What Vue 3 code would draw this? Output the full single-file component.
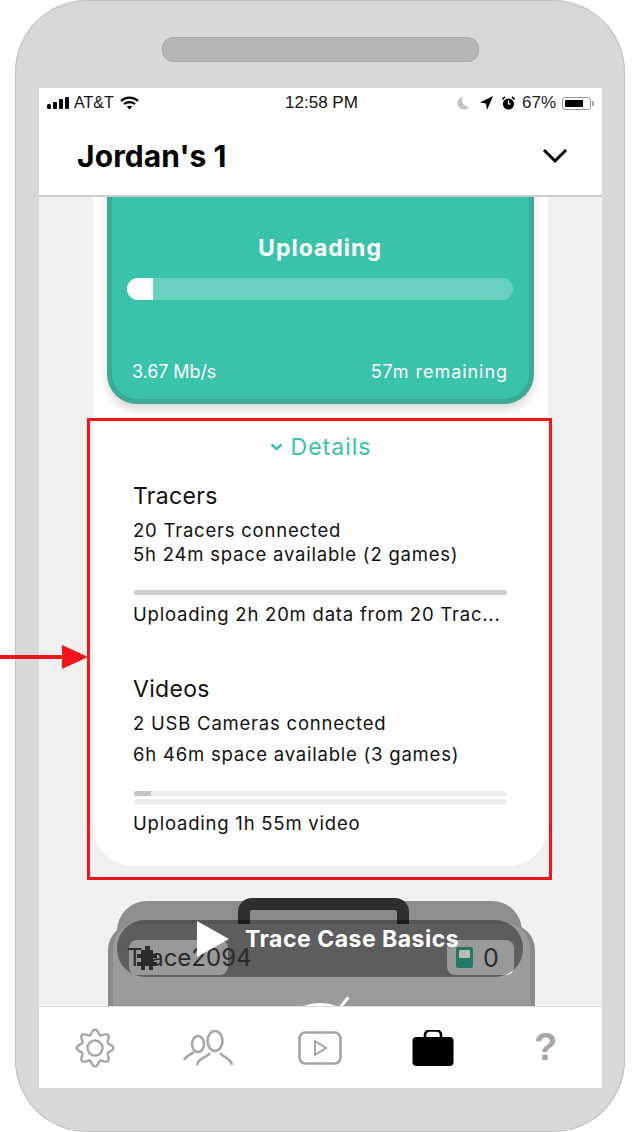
<template>
  <div class="page">
    <div class="phone">
      <div class="speaker"></div>
      <div class="screen">
        <!-- status bar -->
        <div class="status">
          <div class="status-left">
            <svg width="23" height="12" viewBox="0 0 23 12"><rect x="0" y="7" width="4" height="5" rx="1.5"/><rect x="6" y="5" width="4" height="7" rx="1"/><rect x="12" y="2" width="4" height="10" rx="1"/><rect x="18" y="0" width="4" height="12" rx="1"/></svg>
            <span>AT&amp;T</span>
            <svg class="wifi" width="19" height="14" viewBox="0 0 19 14" fill="none" stroke="#000" stroke-width="2.2"><path d="M1 5 C6 0.5 13 0.5 18 5"/><path d="M4 8 C7 5.5 12 5.5 15 8"/><path d="M9.5 13.5 L6.8 10.6 C8.3 9.6 10.7 9.6 12.2 10.6 Z" fill="#000" stroke="none"/></svg>
          </div>
          <div class="status-time">12:58 PM</div>
          <div class="status-right">
            <svg width="12" height="14" viewBox="0 0 12 14"><path d="M6 0.5 A6.5 6.5 0 1 0 12 11 A7 7 0 0 1 6 0.5 Z" fill="#c4c4c4"/></svg>
            <svg class="nav-arrow" width="13" height="14" viewBox="0 0 13 14"><path d="M13 0 L0 6.5 L6 7.5 L7 14 Z"/></svg>
            <svg class="alarm" width="13" height="14" viewBox="0 0 13 14"><circle cx="6.5" cy="8" r="5.6"/><path d="M0.5 3.5 L3 0.8 M12.5 3.5 L10 0.8" stroke="#000" stroke-width="1.6"/><path d="M6.5 4.5 V8 H9" stroke="#fff" stroke-width="1.2" fill="none"/></svg>
            <span>67%</span>
            <div class="battery"><div class="battery-level"></div></div>
            <div class="battery-tip"></div>
          </div>
        </div>

        <!-- header -->
        <header class="header">
          <h1>Jordan's 1</h1>
          <svg width="26" height="16" viewBox="0 0 26 16" fill="none" stroke="#000" stroke-width="3"><path d="M2 2 L13 13 L24 2"/></svg>
        </header>

        <!-- scrolling content -->
        <main class="content">
          <section class="sheet">
            <div class="upload-card">
              <div class="upload-title">Uploading</div>
              <div class="progress"><div class="progress-fill"></div></div>
              <div class="upload-meta">
                <span class="rate">3.67 Mb/s</span>
                <span>57m remaining</span>
              </div>
            </div>

            <div class="details-toggle">
              <svg width="13" height="8" viewBox="0 0 13 8" fill="none" stroke="#39c3aa" stroke-width="2.4"><path d="M1.5 1.5 L6.5 6 L11.5 1.5"/></svg>
              <span>Details</span>
            </div>

            <div class="block">
              <h2>Tracers</h2>
              <p class="tight">20 Tracers connected</p>
              <p class="tight">5h 24m space available (2 games)</p>
              <div class="track solid first-track"></div>
              <p class="caption">Uploading 2h 20m data from 20 Trac...</p>
            </div>

            <div class="block videos">
              <h2>Videos</h2>
              <p class="loose">2 USB Cameras connected</p>
              <p class="loose">6h 46m space available (3 games)</p>
              <div class="track first-track video-track"><div class="track-fill"></div></div>
              <div class="track second-track"></div>
              <p class="caption">Uploading 1h 55m video</p>
            </div>
          </section>

          <section class="case">
            <div class="case-lid"></div>
            <div class="case-handle"></div>
            <div class="case-body">
              <div class="case-row">
                <div class="chip chip-name"></div>
                <div class="chip chip-count"></div>
              </div>
              <div class="case-gauge"></div>
              <div class="case-needle"></div>
            </div>
            <div class="tip-pill"></div>
            <svg class="case-mark" width="24" height="24" viewBox="0 0 24 24" fill="#2b2b2b"><path d="M8 0h5v4h3v4h4v4h-4v4h4v4h-4v4h-4v-4H8v4H4v-4H0v-4h4v-4H0V8h4V4h4z"/></svg>
            <span class="case-name">Trace2094</span>
            <svg class="tracer-icon" width="17" height="21" viewBox="0 0 17 21"><rect width="17" height="21" rx="2" fill="#217a68"/><rect x="3" y="3" width="11" height="8" rx="1" fill="#b9b9b9"/></svg>
            <span class="case-count">0</span>
            <svg class="tip-play" width="32" height="36" viewBox="0 0 32 36"><path d="M0 0 L32 18 L0 36 Z" fill="#fff"/></svg>
            <span class="tip-label">Trace Case Basics</span>
          </section>
        </main>

        <!-- tab bar -->
        <nav class="tabs">
          <svg width="40" height="40" viewBox="0 0 40 40" fill="none" stroke="#a6a6a6" stroke-width="2.4"><circle cx="20" cy="20" r="7.5"/><path :d="gearPath" stroke-linejoin="round"/></svg>
          <svg width="50" height="36" viewBox="0 0 50 36" fill="none" stroke="#a6a6a6" stroke-width="2.6"><ellipse cx="15" cy="14" rx="6" ry="8"/><path d="M1 30 C3 25 8 25 11 22"/><ellipse cx="32" cy="11" rx="7.5" ry="10"/><path d="M14 35 C15 28 22 29 27 23 M37 23 C41 28 48 28 49 35"/></svg>
          <svg width="44" height="34" viewBox="0 0 44 34" fill="none" stroke="#a6a6a6" stroke-width="2.6"><rect x="1.5" y="1.5" width="41" height="31" rx="6"/><path d="M17 10 L28 17 L17 24 Z" stroke-width="2"/></svg>
          <svg width="42" height="36" viewBox="0 0 42 36"><path d="M13 7 V5 A4.5 4.5 0 0 1 17.5 0.5 H24.5 A4.5 4.5 0 0 1 29 5 V7" fill="none" stroke="#000" stroke-width="2.6"/><rect x="0.5" y="7" width="41" height="29" rx="4"/></svg>
          <span class="help">?</span>
        </nav>
      </div>
    </div>

    <!-- annotation -->
    <div class="callout"></div>
    <div class="arrow-line"></div>
    <div class="arrow-head"></div>
  </div>
</template>

<script setup>
// wavy outline of the settings cog, 8 lobes
const points = []
for (let i = 0; i < 96; i++) {
  const a = (i / 96) * Math.PI * 2
  const r = 16 + 2.4 * Math.cos(a * 8)
  points.push(`${(20 + r * Math.sin(a)).toFixed(2)} ${(20 - r * Math.cos(a)).toFixed(2)}`)
}
const gearPath = `M${points.join(' L')} Z`
</script>

<style>
html, body {
  margin: 0;
  background: #fff;
}
</style>

<style scoped>
.page {
  position: relative;
  width: 640px;
  height: 1132px;
  overflow: hidden;
  font-family: Inter, "Noto Sans", sans-serif;
  color: #111;
}

.phone {
  width: 610px;
  height: 1132px;
  margin-left: 15px;
  box-sizing: border-box;
  padding: 37px 23px 44px 24px;
  background: #d8d8d8;
  border-radius: 72px;
  box-shadow: inset 0 0 0 1px #c2c2c2;
}

.speaker {
  width: 317px;
  height: 25px;
  margin: 0 auto 26px;
  background: #b5b5b5;
  border-radius: 12px;
  box-shadow: inset 0 0 0 1px #a9a9a9;
}

.screen {
  height: 1000px;
  background: #fff;
  display: flex;
  flex-direction: column;
}

.status {
  height: 28px;
  flex: none;
  padding: 2px 8px 0;
  box-sizing: border-box;
  display: grid;
  grid-template-columns: 1fr auto 1fr;
  align-items: center;
  font-family: "Liberation Sans", sans-serif;
}

.status-left,
.status-right {
  display: flex;
  align-items: center;
}

.status-left span {
  margin-left: 4px;
  font-size: 16px;
}

.wifi {
  margin-left: 6px;
}

.status-time {
  font-size: 17px;
  position: relative;
  left: 1px;
}

.status-right {
  justify-content: flex-end;
  font-size: 17px;
  color: #222;
}

.nav-arrow {
  margin-left: 11px;
}

.alarm {
  margin-left: 9px;
}

.status-right span {
  margin-left: 7px;
}

.battery {
  width: 29px;
  height: 13px;
  margin-left: 6px;
  box-sizing: border-box;
  padding: 2px;
  border: 1px solid #999;
  border-radius: 3px;
}

.battery-level {
  width: 18px;
  height: 100%;
  background: #000;
  border-radius: 1px;
}

.battery-tip {
  width: 2px;
  height: 5px;
  margin-left: 1px;
  background: #aaa;
}

.header {
  height: 81px;
  flex: none;
  box-sizing: border-box;
  padding: 0 34px 0 38px;
  display: flex;
  justify-content: space-between;
  align-items: center;
  border-bottom: 2px solid #ccc;
}

.header h1 {
  margin: 0;
  font-size: 30px;
  font-weight: 700;
  letter-spacing: 0.1px;
  color: #000;
}

.content {
  flex: 1;
  min-height: 0;
  overflow: hidden;
  background: #f2f1f0;
}

.sheet {
  margin: -60px 54px 0;
  padding: 0 14px;
  height: 729px;
  box-sizing: border-box;
  background: #fff;
  border-radius: 0 0 40px 40px;
}

.upload-card {
  height: 267px;
  box-sizing: border-box;
  padding: 97px 16px 0 15px;
  background: #39c3aa;
  border: solid #3fa997;
  border-width: 0 5px 5px;
  border-radius: 0 0 30px 30px;
  box-shadow: 0 6px 10px rgba(0, 0, 0, 0.14);
  color: #fff;
  text-align: center;
}

.upload-title {
  height: 28px;
  line-height: 28px;
  font-size: 23px;
  font-weight: 700;
  letter-spacing: 1px;
}

.progress {
  height: 22px;
  margin-top: 16px;
  background: #69d1be;
  border-radius: 11px;
  overflow: hidden;
}

.progress-fill {
  width: 26px;
  height: 100%;
  background: #fff;
}

.upload-meta {
  display: flex;
  justify-content: space-between;
  margin-top: 60px;
  padding: 0 5px 0 5px;
  font-size: 18px;
  line-height: 24px;
  letter-spacing: 0.95px;
}

.rate {
  letter-spacing: -0.1px;
}

.details-toggle {
  margin-top: 28px;
  display: flex;
  justify-content: center;
  align-items: center;
  gap: 8px;
  height: 30px;
  color: #39c3aa;
  font-size: 23px;
  letter-spacing: 1px;
}

.block {
  margin-left: 27px;
  width: 373px;
}

.block h2 {
  margin: 19px 0 7px -1px;
  font-size: 23px;
  line-height: 30px;
  font-weight: 400;
  letter-spacing: 0.3px;
}

.block p {
  margin: 0 0 0 -1px;
  font-size: 18.5px;
  letter-spacing: 0.78px;
  white-space: nowrap;
}

.tight {
  line-height: 24px;
}

.loose {
  line-height: 31px;
}

.track {
  height: 5px;
  background: #eee;
  border-radius: 3px;
  overflow: hidden;
}

.track.solid {
  background: #ccc;
}

.first-track {
  margin-top: 24px;
}

.track-fill {
  width: 17px;
  height: 100%;
  background: #c4c4c4;
}

.second-track {
  margin-top: 3px;
  height: 6px;
}

.block .caption {
  margin-top: 7px;
  line-height: 24px;
}

.videos h2 {
  margin-top: 48px;
  margin-bottom: 4px;
}

.videos .caption {
  margin-top: 6px;
}

.video-track {
  margin-top: 21px;
}

.case {
  position: relative;
  height: 108px;
  box-sizing: border-box;
  margin-top: 32px;
  padding: 26px 67px 0 69px;
}

.case-lid {
  position: absolute;
  left: 78px;
  top: 3px;
  width: 405px;
  height: 70px;
  background: #8f8e8c;
  border-radius: 30px 30px 0 0;
}

.case-handle {
  position: absolute;
  left: 199px;
  top: 0;
  width: 171px;
  height: 30px;
  box-sizing: border-box;
  background: #8a8a8a;
  border: 12px solid #2e2e2e;
  border-bottom: 0;
  border-radius: 14px 14px 0 0;
}

.case-body {
  position: relative;
  height: 90px;
  box-sizing: border-box;
  padding: 16px 16px 0;
  background: #9b9b9b;
  border: solid #8a8a8a;
  border-width: 0 5px;
  border-radius: 26px 26px 0 0;
  overflow: hidden;
}

.case-row {
  display: flex;
  justify-content: space-between;
}

.chip {
  height: 35px;
  background: #fff;
  border-radius: 8px;
}

.chip-name {
  width: 99px;
}

.chip-count {
  width: 67px;
}

.case-gauge {
  position: absolute;
  left: 157px;
  top: 79px;
  width: 100px;
  height: 100px;
  background: #fff;
  border-radius: 50%;
}

.case-needle {
  position: absolute;
  left: 230px;
  top: 72px;
  width: 3px;
  height: 12px;
  background: #fff;
  transform: rotate(40deg);
}

.tip-pill {
  position: absolute;
  left: 78px;
  top: 22px;
  width: 406px;
  height: 57px;
  background: rgba(0, 0, 0, 0.4);
  border-radius: 28px;
}

.case-mark {
  position: absolute;
  left: 98px;
  top: 48px;
}

.case-name {
  position: absolute;
  left: 88px;
  top: 45px;
  font-size: 24px;
  line-height: 30px;
  color: #2b2b2b;
}

.tracer-icon {
  position: absolute;
  left: 417px;
  top: 49px;
}

.case-count {
  position: absolute;
  left: 444px;
  top: 45px;
  font-size: 25px;
  line-height: 30px;
  color: #2b2b2b;
}

.tip-play {
  position: absolute;
  left: 158px;
  top: 23px;
}

.tip-label {
  position: absolute;
  left: 206px;
  top: 27px;
  font-size: 23px;
  line-height: 28px;
  font-weight: 700;
  letter-spacing: 0.5px;
  color: #fff;
  white-space: nowrap;
}

.tabs {
  height: 82px;
  flex: none;
  box-sizing: border-box;
  display: grid;
  grid-template-columns: repeat(5, 1fr);
  justify-items: center;
  align-items: center;
  background: #fff;
  border-top: 1px solid #ddd;
}

.help {
  font-family: "Liberation Sans", sans-serif;
  font-size: 38px;
  font-weight: 700;
  color: #a6a6a6;
}

.callout {
  position: absolute;
  left: 87px;
  top: 418px;
  width: 465px;
  height: 462px;
  box-sizing: border-box;
  border: 3px solid #f5131c;
}

.arrow-line {
  position: absolute;
  left: 0;
  top: 655px;
  width: 66px;
  height: 4px;
  background: #f5131c;
}

.arrow-head {
  position: absolute;
  left: 62px;
  top: 645px;
  border-left: 26px solid #f5131c;
  border-top: 12px solid transparent;
  border-bottom: 12px solid transparent;
}
</style>
